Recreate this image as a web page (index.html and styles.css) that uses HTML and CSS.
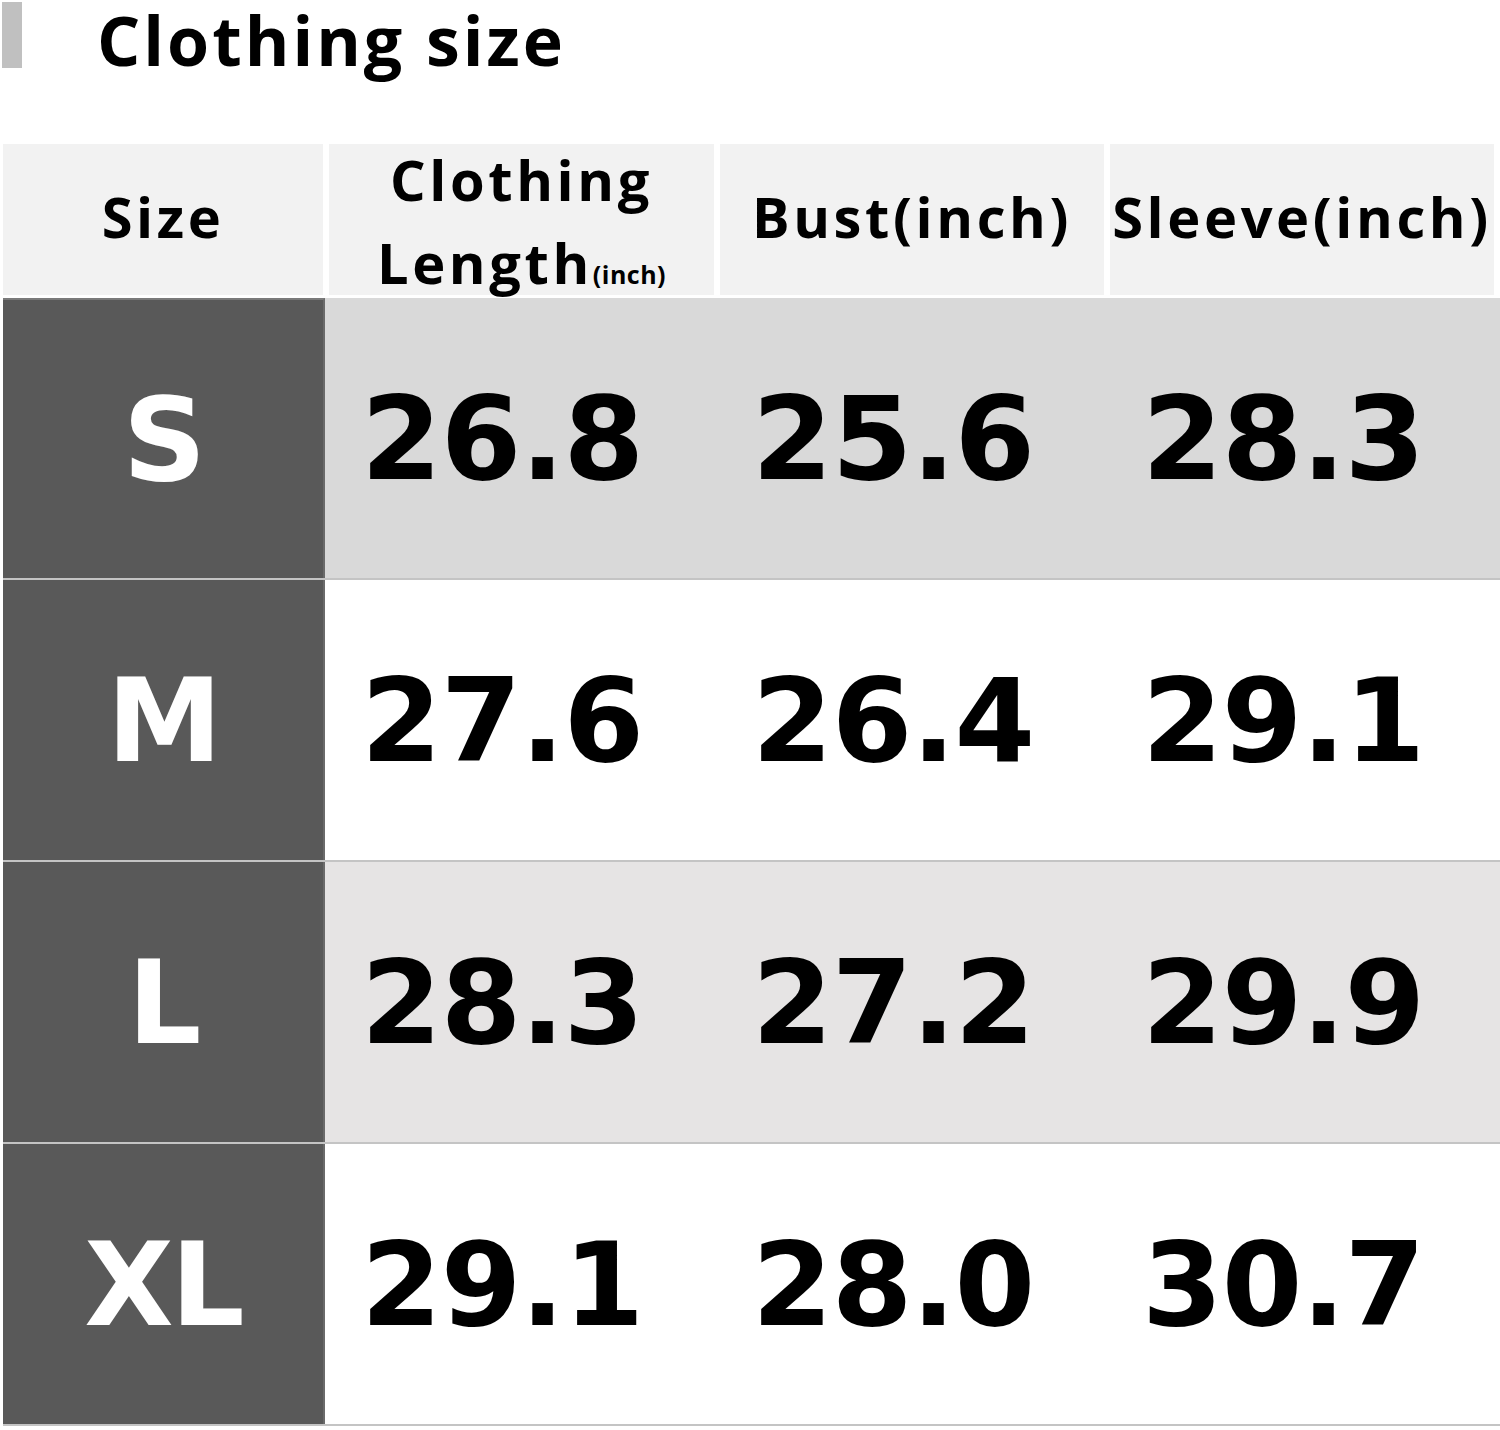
FILE: index.html
```html
<!DOCTYPE html>
<html lang="en">
<head>
<meta charset="utf-8">
<title>Clothing size</title>
<link rel="stylesheet" href="styles.css">
</head>
<body>
<div class="page">
  <div class="title-row">
    <span class="title-bar"></span>
    <h1 class="title">Clothing size</h1>
  </div>

  <div class="table">
    <div class="head">
      <div class="hcell"><span>Size</span></div>
      <div class="hcell hcell-two">
        <div class="two-lines">
          <div>Clothing</div>
          <div>Length<small class="unit">(inch)</small></div>
        </div>
      </div>
      <div class="hcell"><span>Bust(inch)</span></div>
      <div class="hcell"><span>Sleeve(inch)</span></div>
    </div>

    <div class="row row-s">
      <div class="size">S</div>
      <div class="val">26.8</div>
      <div class="val">25.6</div>
      <div class="val">28.3</div>
    </div>
    <div class="row row-m">
      <div class="size">M</div>
      <div class="val">27.6</div>
      <div class="val">26.4</div>
      <div class="val">29.1</div>
    </div>
    <div class="row row-l">
      <div class="size">L</div>
      <div class="val">28.3</div>
      <div class="val">27.2</div>
      <div class="val">29.9</div>
    </div>
    <div class="row row-xl">
      <div class="size">XL</div>
      <div class="val">29.1</div>
      <div class="val">28.0</div>
      <div class="val">30.7</div>
    </div>
  </div>
</div>
</body>
</html>
```

FILE: styles.css
```css
html, body {
  margin: 0;
  padding: 0;
  background: #ffffff;
}

.page {
  width: 1500px;
  height: 1430px;
  overflow: hidden;
  background: #ffffff;
  color: #000000;
}

.title-row {
  display: flex;
  align-items: flex-start;
  height: 144px;
}

.title-bar {
  display: block;
  flex: none;
  width: 20px;
  height: 66px;
  margin: 2px 0 0 2px;
  background: #c0c0c0;
}

.title {
  flex: none;
  margin: 0 0 0 75px;
  padding: 0;
  font-family: "Open Sans", "Liberation Sans", sans-serif;
  font-weight: 700;
  font-size: 68px;
  line-height: 80px;
  letter-spacing: 3px;
  white-space: nowrap;
}

.table {
  margin-left: 3px;
}

.head {
  display: grid;
  grid-template-columns: 320px 385px 384px 384px;
  grid-template-rows: 151px;
  column-gap: 6px;
  height: 151px;
  margin-bottom: 3px;
}

.hcell {
  background: #f2f2f2;
  display: flex;
  align-items: center;
  justify-content: center;
  font-family: "Open Sans", "Liberation Sans", sans-serif;
  font-weight: 700;
  font-size: 56px;
  line-height: 66px;
  letter-spacing: 3.6px;
  text-align: center;
  white-space: nowrap;
  overflow: visible;
  min-height: 0;
}

.hcell span {
  display: block;
  margin-top: -8px;
}

.hcell-two {
  align-items: flex-start;
}

.two-lines {
  line-height: 83px;
  margin-top: -6px;
}

.unit {
  font-size: 25px;
  letter-spacing: 0.5px;
}

.row {
  display: grid;
  grid-template-columns: 322px 391px 390px 1fr;
  height: 280px;
  border-bottom: 2px solid #c4c4c4;
  font-family: "DejaVu Sans", "Verdana", sans-serif;
  font-weight: 700;
  font-size: 116px;
}

.row-s { background: #d9d9d9; }
.row-m { background: #ffffff; }
.row-l { background: #e6e4e4; }
.row-xl { background: #ffffff; }

.size {
  background: #595959;
  color: #ffffff;
  display: flex;
  align-items: center;
  justify-content: center;
  border-right: 2px solid #6a6a6a;
  letter-spacing: -3px;
}

.row-s .size {
  border-top: 2px solid #7a7a7a;
  box-sizing: border-box;
}

.val {
  display: flex;
  align-items: center;
  padding-left: 36px;
  letter-spacing: -1px;
}
```
